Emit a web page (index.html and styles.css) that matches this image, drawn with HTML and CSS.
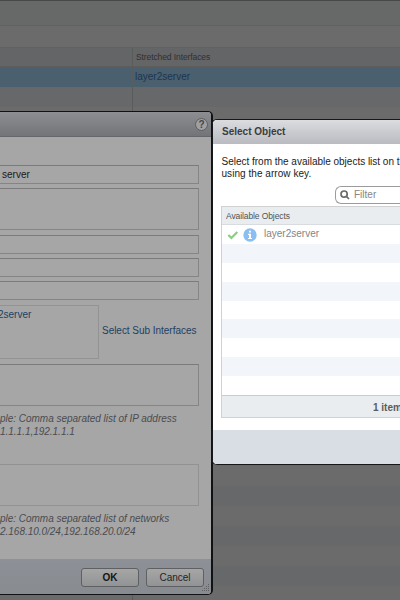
FILE: index.html
```
<!DOCTYPE html>
<html lang="en">
<head>
<meta charset="utf-8">
<title>Select Object</title>
<link rel="stylesheet" href="styles.css">
</head>
<body>
<main class="page">
  <div class="toolbar"></div>
  <div class="subbar"></div>
  <div class="grid-head"><span class="cell-left"></span><span class="cell-right head-text">Stretched Interfaces</span></div>
  <div class="grid-row selected"><span class="cell-left"></span><span class="cell-right link">layer2server</span></div>
  <div class="grid-stripes"><span class="cell-left"></span></div>
</main>

<section class="dialog edit">
  <header class="edit-title"><span class="help">?</span></header>
  <div class="edit-body">
    <div class="field first">server</div>
    <div class="field area"></div>
    <div class="field"></div>
    <div class="field"></div>
    <div class="field"></div>
    <div class="sub-row">
      <div class="sub-box">2server</div>
      <span class="sub-link">Select Sub Interfaces</span>
    </div>
    <div class="field area"></div>
    <p class="hint"><span>ple: Comma separated list of IP address</span><br><span>1.1.1.1,192.1.1.1</span></p>
    <div class="field area faint"></div>
    <p class="hint"><span>ple: Comma separated list of networks</span><br><span>2.168.10.0/24,192.168.20.0/24</span></p>
  </div>
  <footer class="edit-foot">
    <button class="btn ok">OK</button>
    <button class="btn">Cancel</button>
    <svg class="grip" width="9" height="9" viewBox="0 0 9 9"><path d="M7 0h1v1h-1zM5 2h1v1h-1zM7 2h1v1h-1zM3 4h1v1h-1zM5 4h1v1h-1zM7 4h1v1h-1zM1 6h1v1h-1zM3 6h1v1h-1zM5 6h1v1h-1zM7 6h1v1h-1z"/></svg>
  </footer>
</section>

<section class="dialog select">
  <header class="select-title"><span>Select Object</span></header>
  <div class="select-body">
    <p class="intro"><span class="lead">Select from the available objects list on the</span><br><span>using the arrow key.</span></p>
    <div class="filter">
      <svg width="10" height="10" viewBox="0 0 10 10"><circle cx="4.1" cy="4.1" r="3.1"/><path d="M6.4 6.4L9 9"/></svg>
      <span>Filter</span>
    </div>
    <div class="list">
      <div class="list-head"><span>Available Objects</span></div>
      <div class="list-rows">
        <div class="item">
          <svg class="check" width="12" height="10" viewBox="0 0 12 10"><path d="M1.3 5L4.4 7.9L10.3 1.9"/></svg>
          <svg class="info" width="14" height="14" viewBox="0 0 14 14"><circle cx="7" cy="7" r="6.7"/><path d="M6 2.8h2v1.8H6zM5 5.7h3v4.2h1v1.2H5V9.9h1V6.9H5z"/></svg>
          <span>layer2server</span>
        </div>
        <div></div><div></div><div></div><div></div><div></div><div></div><div></div><div></div>
      </div>
      <div class="list-foot"><span>1 item</span></div>
    </div>
  </div>
  <footer class="select-foot"></footer>
</section>
</body>
</html>
```
FILE: styles.css
```
* { box-sizing: border-box; }
body {
  margin: 0;
  width: 400px;
  height: 600px;
  position: relative;
  overflow: hidden;
  background: #6b6b6b;
  font: 10px/12px "Liberation Sans", Arial, sans-serif;
}
span { white-space: nowrap; }
p { margin: 0; }

.page { display: flex; flex-direction: column; height: 600px; }
.toolbar { height: 26px; background: #666967; border-top: 1px solid #484848; border-bottom: 1px solid #606260; }
.subbar { height: 21px; background: #6b6b6b; }
.grid-head, .grid-row { display: flex; height: 20px; align-items: center; }
.grid-head { background: #646566; border-top: 1px solid #606162; border-bottom: 1px solid #5e5d5c; }
.cell-left { width: 133px; height: 100%; border-right: 1px solid #5a5b5c; flex: none; }
.head-text { padding-left: 3px; font-size: 8.5px; color: #303034; letter-spacing: -0.1px; }
.selected { background: #4b606e; }
.link { padding: 0 0 1px 2px; color: #1c3553; }
.grid-stripes {
  flex: 1;
  display: flex;
  background: repeating-linear-gradient(#66686a 0 20px, #6b6b6b 20px 39.9px);
}

.dialog { position: absolute; display: flex; flex-direction: column; overflow: hidden; }
.dialog > header, .dialog > footer { flex: none; }

.edit {
  left: 0; top: 111px; width: 213px; height: 484px;
  border: 1px solid #111214;
  border-left: 0;
  border-right-width: 2px;
  border-radius: 0 5px 5px 0;
  background: #a6a6a6;
}
.edit-title {
  height: 25px;
  display: flex; align-items: center; justify-content: flex-end;
  padding-right: 3px;
  background: linear-gradient(#8d8e92, #737478);
  border-bottom: 1px solid #66676a;
}
.help {
  width: 13px; height: 13px; border-radius: 50%;
  border: 1px solid #5d5e60;
  background: #a0a0a0;
  color: #454547;
  font-weight: bold; font-size: 10px; line-height: 11px; text-align: center;
}
.edit-body { flex: 1; min-height: 0; padding: 28px 12px 0 0; }
.field {
  height: 19px; margin-bottom: 4.3px;
  border: 1px solid #858585; border-top-color: #7b7b7b; border-left: 0;
}
.first { padding-left: 2px; line-height: 18px; color: #19191b; }
.area { height: 42px; }
.faint { border-color: #929292; }
.sub-row { display: flex; align-items: center; height: 54px; margin: 5px 0; }
.sub-box { width: 99px; height: 54px; border: 1px solid #939393; border-left: 0; padding-top: 3px; text-indent: -2px; }
.sub-box, .sub-link { color: #223f62; }
.sub-link { margin: 0 0 2px 3px; letter-spacing: -0.03px; }
.hint { margin: 6px 0 27px; height: 25px; line-height: 13px; font-style: italic; color: #4b4c50; letter-spacing: -0.02px; }
.hint:last-child { margin-bottom: 0; }
.edit-foot {
  height: 35px; position: relative;
  display: flex; gap: 7px; justify-content: flex-end; align-items: center;
  padding: 2px 7px 0 0;
  background: linear-gradient(#8d9197, #888b90);
}
.btn {
  width: 58px; height: 19px; padding: 0;
  border: 1px solid #5e6062; border-radius: 3px;
  background: linear-gradient(#a6a6a6, #929395);
  color: #242426; font: 10px/15px "Liberation Sans", Arial, sans-serif;
}
.ok { font-weight: bold; color: #151517; }
.grip { position: absolute; right: 1px; bottom: 1px; fill: #5d5f62; }

.select {
  left: 212px; top: 119px; width: 188px; height: 346px;
  border: 1px solid #17181a;
  border-right: 0;
  border-radius: 5px 0 0 5px;
  background: #fff;
}
.select-title {
  height: 24px; padding: 0 9px;
  display: flex; align-items: center;
  background: linear-gradient(#dbdce0, #b9bbc0);
  font-weight: bold; color: #3b3c3e;
}
.select-body { flex: 1; padding: 12px 0 0 8px; }
.intro { height: 24px; padding-left: 0.5px; color: #222; letter-spacing: 0.05px; }
.lead { letter-spacing: -0.01px; }
.filter {
  width: 65px; height: 18px; margin: 6px 0 2px 114px;
  display: flex; align-items: center; gap: 4px; padding-left: 4px;
  border: 1px solid #999b9d; border-right: 0; border-radius: 6px 0 0 6px;
  color: #858585;
}
.filter svg { fill: none; stroke: #6b6b6b; stroke-width: 1.7; }
.list { height: 212px; display: flex; flex-direction: column; border: 1px solid #cfd1d3; border-right: 0; }
.list-head { height: 18px; padding: 0 0 0 4px; line-height: 18px; font-size: 8.5px; letter-spacing: -0.1px; background: #e9edf0; color: #505356; border-bottom: 1px solid #d9dcde; }
.list-rows { flex: 1; display: grid; grid-template-rows: repeat(9, 1fr); }
.list-rows > div:nth-child(even) { background: #f2f6fb; }
.item { display: flex; align-items: center; color: #858585; padding-left: 5px; }
.item span { margin: 0 0 1px 7px; }
.check { fill: none; stroke: #88cf82; stroke-width: 2.2; margin-top: 2px; }
.info { margin: 2px 0 0 4px; }
.info circle { fill: #8bbff1; }
.info path { fill: #fff; }
.list-foot { height: 22px; border-top: 1px solid #c9cbcd; background: #e9edf0; padding-left: 151px; line-height: 23px; font-weight: bold; color: #5b5b5b; overflow: hidden; }
.select-foot { height: 34px; background: #d9dee5; }
```
